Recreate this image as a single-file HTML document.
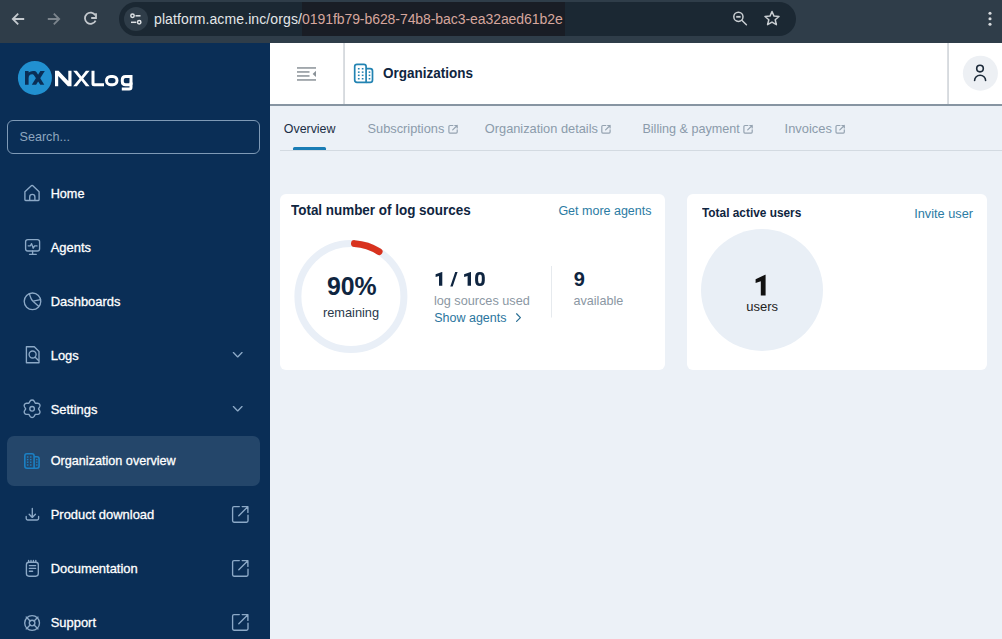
<!DOCTYPE html>
<html><head><meta charset="utf-8">
<style>
*{margin:0;padding:0;box-sizing:border-box}
html,body{width:1002px;height:639px;overflow:hidden;background:#ecf1f7;font-family:"Liberation Sans",sans-serif}
.a{position:absolute;white-space:nowrap;line-height:1;transform-origin:0 0}
.bg{position:absolute}
.nav{color:#fff;font-size:12.95px;-webkit-text-stroke:0.3px #fff;left:50.7px}
.tab{font-size:12.8px;color:#8b9bab;top:123px}
svg{position:absolute;left:0;top:0}
</style></head><body>
<!-- backgrounds -->
<div class="bg" style="left:0;top:0;width:1002px;height:43px;background:#2f3d49"></div>
<div class="bg" style="left:119px;top:2px;width:677px;height:34px;border-radius:17px;background:#1b2833"></div>
<div class="bg" style="left:302px;top:2px;width:263px;height:34px;background:#191d25"></div>
<div class="bg" style="left:0;top:43px;width:270px;height:596px;background:#0a2e56"></div>
<div class="bg" style="left:270px;top:43px;width:732px;height:63px;background:#fff;border-bottom:2px solid #8795a2"></div>
<div class="bg" style="left:7px;top:120px;width:253px;height:34px;border:1px solid #7f9ab6;border-radius:6px"></div>
<div class="bg" style="left:7px;top:436px;width:253px;height:50px;border-radius:7px;background:#24466a"></div>
<div class="bg" style="left:280px;top:194px;width:385px;height:176px;background:#fff;border-radius:6px"></div>
<div class="bg" style="left:687px;top:194px;width:300px;height:176px;background:#fff;border-radius:6px"></div>

<!-- chrome text -->
<div class="a" style="left:154px;top:12px;font-size:14px;color:#e3e6e8;letter-spacing:0.11px">platform.acme.inc/orgs/<span style="color:#d6a69d;letter-spacing:-0.07px">0191fb79-b628-74b8-bac3-ea32aed61b2e</span></div>

<!-- sidebar text -->
<div class="a" style="left:19.5px;top:130.8px;font-size:12.6px;color:#8ea6bf">Search...</div>
<div class="a nav" style="top:187.9px;font-size:12.65px">Home</div>
<div class="a nav" style="top:241.7px">Agents</div>
<div class="a nav" style="top:295.7px">Dashboards</div>
<div class="a nav" style="top:349.7px">Logs</div>
<div class="a nav" style="top:403.7px">Settings</div>
<div class="a nav" style="top:455.4px;font-size:12.65px">Organization overview</div>
<div class="a nav" style="top:509.1px">Product download</div>
<div class="a nav" style="top:563.2px">Documentation</div>
<div class="a nav" style="top:617.3px">Support</div>

<!-- header / tabs text -->
<div class="a" style="left:383.4px;top:66.1px;font-size:14.2px;font-weight:bold;color:#0f2540;transform:scaleX(0.951)">Organizations</div>
<div class="a" style="left:283.8px;top:123.4px;font-size:12.4px;color:#1b2e45">Overview</div>
<div class="a tab" style="left:367.5px">Subscriptions</div>
<div class="a tab" style="left:484.8px">Organization details</div>
<div class="a tab" style="left:642.4px;font-size:12.6px">Billing &amp; payment</div>
<div class="a tab" style="left:784.6px;font-size:12.9px">Invoices</div>

<!-- card 1 -->
<div class="a" style="left:290.8px;top:202.8px;font-size:14.1px;font-weight:bold;color:#0f2540;transform:scaleX(0.953)">Total number of log sources</div>
<div class="a" style="left:558.4px;top:204.8px;font-size:12.5px;color:#2b7ba3">Get more agents</div>
<div class="a" style="left:327.3px;top:273.1px;font-size:26px;font-weight:bold;color:#0f2540;transform:scaleX(0.955)">90%</div>
<div class="a" style="left:322.9px;top:306.7px;font-size:12.8px;color:#2a3a4c">remaining</div>
<svg width="1002" height="639" viewBox="0 0 1002 639"><g fill="#0f2540">
<path d="M442.3 272.1V285.8H439V276L435.6 277.1V274.3L441.9 272.1z"/>
<path d="M455.2 272.1H457.6L452.7 286.5H450.3z"/>
<path d="M471 272.1V285.8H467.6V276L464.1 277.1V274.3L470.6 272.1z"/>
<path fill-rule="evenodd" d="M479.9 272Q484.8 272 484.8 277.4V280.6Q484.8 286.1 479.9 286.1Q475.1 286.1 475.1 280.6V277.4Q475.1 272 479.9 272zM479.9 274.6Q478.1 274.6 478.1 277.4V280.6Q478.1 283.4 479.9 283.4Q481.8 283.4 481.8 280.6V277.4Q481.8 274.6 479.9 274.6z"/>
</g></svg>
<div class="a" style="left:433.9px;top:294.9px;font-size:12.7px;color:#8b97a3">log sources used</div>
<div class="a" style="left:434.2px;top:311.8px;font-size:12.5px;color:#2a759e">Show agents</div>
<div class="a" style="left:573.7px;top:268.8px;font-size:20px;font-weight:bold;color:#0f2540">9</div>
<div class="a" style="left:573.5px;top:295.2px;font-size:12.6px;color:#8b97a3">available</div>

<!-- card 2 -->
<div class="a" style="left:701.9px;top:207.1px;font-size:12.5px;font-weight:bold;color:#0f2540;transform:scaleX(0.949)">Total active users</div>
<div class="a" style="left:914.2px;top:207.5px;font-size:12.75px;color:#2b7ba3">Invite user</div>

<svg width="1002" height="639" viewBox="0 0 1002 639">
  <!-- chrome icons -->
  <g fill="none" stroke="#c4c9ce" stroke-width="1.8">
    <path d="M24.2 19H13.2M18.2 13.6L12.8 19L18.2 24.4"/>
    <path d="M95.3 15.2A5.6 5.6 0 1 0 95.6 20.6"/>
    <path d="M96 13.2V18H91.2"/>
  </g>
  <g fill="none" stroke="#7c858d" stroke-width="1.8">
    <path d="M47.8 19H58.8M53.8 13.6L59.2 19L53.8 24.4"/>
  </g>
  <circle cx="136" cy="19" r="12" fill="#2f3d49"/>
  <g fill="none" stroke="#dfe3e6" stroke-width="1.5">
    <circle cx="132.5" cy="15.8" r="1.7"/><path d="M135.5 15.8H140.5"/>
    <circle cx="139.2" cy="22.3" r="1.7"/><path d="M131 22.3H136.3"/>
  </g>
  <g fill="none" stroke="#c9ced2" stroke-width="1.5">
    <circle cx="738.4" cy="16.8" r="4.6"/><path d="M741.8 20.2l4.6 4.6" stroke-linecap="round"/><path d="M736.2 16.8h4.4" stroke-width="1.8"/>
    <path d="M772 11.5l2 4.6 5 .4-3.8 3.3 1.2 4.9L772 22.1l-4.4 2.6 1.2-4.9-3.8-3.3 5-.4z" stroke-linejoin="round"/>
  </g>
  <g fill="#d7dbde"><circle cx="990" cy="13.3" r="1.55"/><circle cx="990" cy="18.8" r="1.55"/><circle cx="990" cy="24.3" r="1.55"/></g>

  <!-- logo -->
  <circle cx="34.9" cy="77.9" r="17" fill="#2190d0"/>
  <g fill="#0a2e56">
    <path d="M25 84.8V70.9H28.6V72.5Q30.3 70.9 33 70.9H34.3Q35.6 70.9 36.4 72.1L44.3 84.8H40.3L33.8 75.1Q33.3 74.2 32.2 74.2Q28.6 74.2 28.6 78.2V84.8z"/>
    <path d="M40.4 71.1H44.8L36.1 84.8H31.8z"/>
  </g>
  <g fill="#fff">
    <path d="M55 70.8H58.6L68.3 81V70.8H71.5V86.2H67.9L58.2 76V86.2H55z"/>
    <path d="M73.2 70.8H76.9L81.4 76.4L85.9 70.8H89.6L83.25 78.5L89.6 86.2H85.9L81.4 80.6L76.9 86.2H73.2L79.55 78.5z"/>
    <path d="M91.5 70.8H94.5V83.2H104V86.2H94q-2.5 0-2.5-2.5z"/>
  </g>
  <g fill="none" stroke="#fff" stroke-width="3">
    <rect x="106.5" y="76.4" width="10.5" height="8.3" rx="4.1"/>
    <path d="M131 82.5V87.3q0 1.8-1.8 1.8H121.8"/>
    <path d="M131 84.7H125.6Q122.3 84.7 122.3 81.4V79.7Q122.3 76.4 125.6 76.4H131V84.7"/>
  </g>

  <!-- sidebar icons -->
  <g fill="none" stroke="#8ca9c7" stroke-width="1.35" stroke-linejoin="round" stroke-linecap="round">
    <path d="M24.9 199.7V191.8L31.6 185.6q0.5-0.4 1 0L39.1 191.8V199.7q0 .8-.8 .8H25.7q-.8 0-.8-.8z"/>
    <path d="M29.7 200.4V197a2.6 2.6 0 0 1 5.2 0V200.4"/>
    <rect x="25.6" y="239.6" width="14" height="11.4" rx="2.2"/>
    <path d="M32.6 251V254.2M29.5 254.3H36.3"/>
    <path d="M28.2 245.8H30.4L31.6 243.6L33.2 248.2L34.6 245.9H37"/>
    <circle cx="32.5" cy="301.3" r="8.3"/>
    <path d="M29.4 293.6Q30.8 299.2 33 301.2L38.6 306.3M33 301.2L40.6 299.7"/>
    <path d="M26.4 346.7H34.3L39 351.4V362.7H26.4z"/>
    <circle cx="32.6" cy="354.5" r="3.5"/>
    <path d="M35.2 357.2L38.3 360.3"/>
    <path d="M28.90 403.26L30.06 401.17A2.4 2.4 0 0 1 34.14 401.17L35.30 403.26L37.69 403.21A2.4 2.4 0 0 1 39.73 406.76L38.50 408.80L39.73 410.84A2.4 2.4 0 0 1 37.69 414.39L35.30 414.34L34.14 416.43A2.4 2.4 0 0 1 30.06 416.43L28.90 414.34L26.51 414.39A2.4 2.4 0 0 1 24.47 410.84L25.70 408.80L24.47 406.76A2.4 2.4 0 0 1 26.51 403.21Z"/>
    <circle cx="32.1" cy="408.8" r="2.3"/>
    <path d="M32.3 508.4V517.2M29.2 514.3L32.3 517.4L35.4 514.3"/>
    <path d="M26.2 516.4V518.6q0 1.4 1.4 1.4H37.2q1.4 0 1.4-1.4V516.4"/>
    <rect x="26.4" y="562.2" width="11.9" height="14" rx="2.6"/>
    <path d="M28.6 560.4V562.4M31 560.4V562.4M33.4 560.4V562.4M35.8 560.4V562.4"/>
    <path d="M29.4 565.6H35.6M29.4 568.4H35.6M29.4 571.2H32.6"/>
    <circle cx="32.1" cy="623" r="7.4"/>
    <circle cx="32.1" cy="623" r="2.8"/>
    <path d="M26.2 617.1L30.1 621M34.1 625L38 628.9M38 617.1L34.1 621M30.1 625L26.2 628.9"/>
    <path d="M233.4 352.6L237.7 356.9L242 352.6M233.4 406.6L237.7 410.9L242 406.6"/>
    <path d="M239.3 506.6H234q-1.4 0-1.4 1.4V520.8q0 1.4 1.4 1.4H246.6q1.4 0 1.4-1.4V515.2M242.2 506.6H247.9V512.4M247.6 506.9L238.8 515.7"/>
    <path d="M239.3 560.6H234q-1.4 0-1.4 1.4V574.8q0 1.4 1.4 1.4H246.6q1.4 0 1.4-1.4V569.2M242.2 560.6H247.9V566.4M247.6 560.9L238.8 569.7"/>
    <path d="M239.3 614.6H234q-1.4 0-1.4 1.4V628.8q0 1.4 1.4 1.4H246.6q1.4 0 1.4-1.4V623.2M242.2 614.6H247.9V620.4M247.6 614.9L238.8 623.7"/>
  </g>
  <g fill="none" stroke="#1b80c4" stroke-width="1.6" stroke-linejoin="round">
    <path d="M34.1 468.2H26.9q-2.1 0-2.1-2.1V455.9q0-2.1 2.1-2.1H32q2.1 0 2.1 2.1z"/>
    <path d="M34.1 456.8H37q2.1 0 2.1 2.1V466.1q0 2.1-2.1 2.1H34.1"/>
  </g>
  <g fill="#1b80c4">
    <rect x="26.9" y="456.3" width="1.5" height="1.4"/><rect x="30" y="456.3" width="1.5" height="1.4"/>
    <rect x="26.9" y="458.9" width="1.5" height="1.4"/><rect x="30" y="458.9" width="1.5" height="1.4"/>
    <rect x="26.9" y="461.5" width="1.5" height="1.4"/><rect x="30" y="461.5" width="1.5" height="1.4"/>
    <rect x="26.9" y="464.3" width="1.5" height="1.4"/><rect x="30" y="464.3" width="1.5" height="1.4"/>
    <rect x="36.1" y="458.9" width="1.4" height="1.4"/><rect x="36.1" y="461.5" width="1.4" height="1.4"/><rect x="36.1" y="464.3" width="1.4" height="1.4"/>
  </g>

  <!-- header icons -->
  <g fill="#8a9298">
    <rect x="297" y="67.2" width="19" height="1.5"/>
    <rect x="297" y="71.2" width="12.5" height="1.5"/>
    <rect x="297" y="75.2" width="12.5" height="1.5"/>
    <rect x="297" y="79.2" width="19" height="1.5"/>
    <path d="M316 70.8V77.1L312.6 73.95z"/>
  </g>
  <rect x="343.3" y="43" width="1.5" height="61" fill="#ccd1d6"/>
  <rect x="947.3" y="43" width="1.5" height="61" fill="#ccd1d6"/>
  <g fill="none" stroke="#2283b2" stroke-width="1.7" stroke-linejoin="round">
    <path d="M366.1 82.3H357q-2.3 0-2.3-2.3V66.6q0-2.3 2.3-2.3H363.8q2.3 0 2.3 2.3z"/>
    <path d="M366.1 68.6H370.1q2.4 0 2.4 2.4V79.9q0 2.4-2.4 2.4H366.1"/>
  </g>
  <g fill="#2283b2">
    <rect x="357.9" y="68" width="1.7" height="1.5"/><rect x="361.8" y="68" width="1.7" height="1.5"/>
    <rect x="357.9" y="71.4" width="1.7" height="1.5"/><rect x="361.8" y="71.4" width="1.7" height="1.5"/>
    <rect x="357.9" y="74.6" width="1.7" height="1.5"/><rect x="361.8" y="74.6" width="1.7" height="1.5"/>
    <rect x="357.9" y="78" width="1.7" height="1.5"/><rect x="361.8" y="78" width="1.7" height="1.5"/>
    <rect x="368.7" y="71.4" width="1.6" height="1.5"/><rect x="368.7" y="74.6" width="1.6" height="1.5"/><rect x="368.7" y="78" width="1.6" height="1.5"/>
  </g>
  <circle cx="980.4" cy="73.2" r="17.5" fill="#edf0f4"/>
  <g fill="none" stroke="#1d2b3a" stroke-width="1.6" stroke-linecap="round">
    <circle cx="980" cy="68.6" r="3.3"/>
    <path d="M974.6 80.4A5.5 5.2 0 0 1 985.6 80.4"/>
  </g>

  <!-- tabs -->
  <rect x="280" y="150" width="722" height="1" fill="#d3dae1"/>
  <path d="M293 150V148.5q0-1.5 1.5-1.5H324.5q1.5 0 1.5 1.5V150z" fill="#1a7db5"/>
  <g fill="none" stroke="#95a3b1" stroke-width="1.2" stroke-linecap="round" stroke-linejoin="round">
    <path d="M452.9 125.5H449.9q-1 0-1 1V132.1q0 1 1 1H456.2q1 0 1-1V129.8M452.7 129.9L457.2 125.5M454.8 125.5H457.2V127.9"/>
    <path d="M605.8 125.5H602.8q-1 0-1 1V132.1q0 1 1 1H609.1q1 0 1-1V129.8M605.6 129.9L610.1 125.5M607.7 125.5H610.1V127.9"/>
    <path d="M747.9 125.5H744.9q-1 0-1 1V132.1q0 1 1 1H751.2q1 0 1-1V129.8M747.7 129.9L752.2 125.5M749.8 125.5H752.2V127.9"/>
    <path d="M840.0 125.5H837.0q-1 0-1 1V132.1q0 1 1 1H843.3q1 0 1-1V129.8M839.8 129.9L844.3 125.5M841.9 125.5H844.3V127.9"/>
  </g>

  <!-- card graphics -->
  <circle cx="350.9" cy="296.5" r="53" fill="none" stroke="#e9eff7" stroke-width="7"/>
  <path d="M354.50 243.62A53 53 0 0 1 379.06 251.60" fill="none" stroke="#d8321e" stroke-width="7" stroke-linecap="round"/>
  <rect x="551" y="266" width="1" height="51.5" fill="#e6eaee"/>
  <circle cx="762" cy="290" r="61" fill="#e9eff6"/>
  <path d="M516.6 313.8L520.4 317.6L516.6 321.4" fill="none" stroke="#2a6f94" stroke-width="1.25" stroke-linecap="round" stroke-linejoin="round"/>
</svg>
<svg width="1002" height="639" viewBox="0 0 1002 639"><path d="M765.6 274.7V295.5H760.8V281.3L755.6 283V279.3L765.1 274.7z" fill="#111"/></svg>
<div class="a" style="left:746.2px;top:299.5px;font-size:13px;color:#222">users</div>
</body></html>
